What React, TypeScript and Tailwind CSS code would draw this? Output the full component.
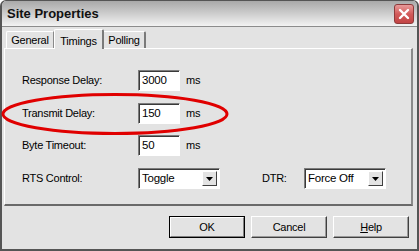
import React from "react";

const font = { fontFamily: '"Liberation Sans", Arial, sans-serif' };

function Field({ value }: { value: string }) {
  return (
    <div className="w-[42px] h-[21px] bg-white border border-t-[#7c7c7c] border-l-[#7c7c7c] border-b-white border-r-white shadow-[inset_1px_1px_0_#3a3a3a] flex items-center pl-[3px] text-[11.5px]">
      {value}
    </div>
  );
}

function Select({ value, width }: { value: string; width: string }) {
  return (
    <div
      className={`${width} h-[21px] bg-white border border-t-[#7c7c7c] border-l-[#7c7c7c] border-b-white border-r-white shadow-[inset_1px_1px_0_#3a3a3a] flex items-center justify-between pl-[3px] pr-[2px] text-[11.5px]`}
    >
      <span>{value}</span>
      <div className="w-[15px] h-[15px] bg-[#e3e3e3] border border-t-white border-l-white border-b-[#404040] border-r-[#404040] flex items-center justify-center">
        <svg width="7" height="4" viewBox="0 0 7 4">
          <path d="M0 0h7L3.5 4z" fill="#000" />
        </svg>
      </div>
    </div>
  );
}

function Button({ children, main }: { children: React.ReactNode; main?: boolean }) {
  return (
    <div
      className={`w-[76px] h-[22px] flex items-center justify-center text-[11px] bg-[#e3e3e3] border ${
        main ? "border-black" : "border-t-white border-l-white border-b-[#404040] border-r-[#404040]"
      }`}
    >
      <div
        className={`w-full h-full flex items-center justify-center ${
          main ? "border border-t-white border-l-white border-b-[#808080] border-r-[#808080]" : "shadow-[inset_-1px_-1px_0_#9a9a9a]"
        }`}
      >
        {children}
      </div>
    </div>
  );
}

export default function App() {
  return (
    <div className="relative w-[419px] h-[251px] bg-white" style={font}>
      <div className="w-full h-full flex flex-col border border-[#555] border-b-2 border-x-2 rounded-t-[6px] overflow-hidden bg-[#e3e3e3] tracking-[-0.25px] text-[11px] text-black">
        {/* title bar */}
        <div className="h-[26px] shrink-0 flex items-center justify-between pl-[5px] pr-[3px] bg-gradient-to-b from-[#a9a9a9] via-[#cdcdcd] to-[#f3f3f3] border-b border-[#8c8c8c]">
          <span className="font-bold text-[13px] tracking-normal text-[#111]">Site Properties</span>
          <div className="w-[20px] h-[20px] rounded-[3px] border border-[#8e3b3b] bg-gradient-to-b from-[#e89a9a] via-[#d25a5a] to-[#c24444] flex items-center justify-center">
            <svg width="12" height="12" viewBox="0 0 12 12">
              <path d="M2 2l8 8M10 2l-8 8" stroke="#fff" strokeWidth="2.4" strokeLinecap="round" />
            </svg>
          </div>
        </div>

        {/* body */}
        <div className="flex-1 flex flex-col pl-[2px] pr-[4px]">
          <div className="h-[21px] flex items-end pl-[2px]">
            <div className="h-[17px] w-[48px] flex items-center justify-center border-l border-t border-white border-r border-r-[#8a8a8a] rounded-tl-[2px]">
              General
            </div>
            <div className="h-[20px] w-[50px] -mb-px relative z-10 bg-[#e3e3e3] flex items-start pt-[3px] justify-center border-l border-t border-white border-r-2 border-r-[#7a7a7a] rounded-t-[2px]">
              Timings
            </div>
            <div className="h-[17px] w-[42px] flex items-center justify-center border-t border-white border-r-2 border-r-[#7a7a7a] rounded-tr-[2px]">
              Polling
            </div>
          </div>

          <div className="h-[158px] border-l border-t border-white border-r-2 border-b-2 border-r-[#8a8a8a] border-b-[#6a6a6a] pl-[17px] flex flex-col">
            <div className="flex items-center h-[21px] mt-[21px]">
              <span className="w-[116px]">Response Delay:</span>
              <Field value="3000" />
              <span className="ml-[6px]">ms</span>
            </div>
            <div className="flex items-center h-[21px] mt-[12px]">
              <span className="w-[116px]">Transmit Delay:</span>
              <Field value="150" />
              <span className="ml-[6px]">ms</span>
            </div>
            <div className="flex items-center h-[21px] mt-[11px]">
              <span className="w-[116px]">Byte Timeout:</span>
              <Field value="50" />
              <span className="ml-[6px]">ms</span>
            </div>
            <div className="flex items-center h-[21px] mt-[12px]">
              <span className="w-[116px]">RTS Control:</span>
              <Select value="Toggle" width="w-[82px]" />
              <span className="ml-[42px] w-[42px]">DTR:</span>
              <Select value="Force Off" width="w-[82px]" />
            </div>
          </div>

          <div className="flex justify-end gap-[6px] pr-[4px] mt-[10px]">
            <Button main>OK</Button>
            <Button>Cancel</Button>
            <Button>
              <span>
                <span className="underline">H</span>elp
              </span>
            </Button>
          </div>
        </div>
      </div>

      {/* red annotation ring */}
      <svg className="absolute left-0 top-0 pointer-events-none" width="419" height="251">
        <ellipse cx="115" cy="114" rx="112" ry="19.5" fill="none" stroke="#e00000" strokeWidth="3" />
      </svg>
    </div>
  );
}
